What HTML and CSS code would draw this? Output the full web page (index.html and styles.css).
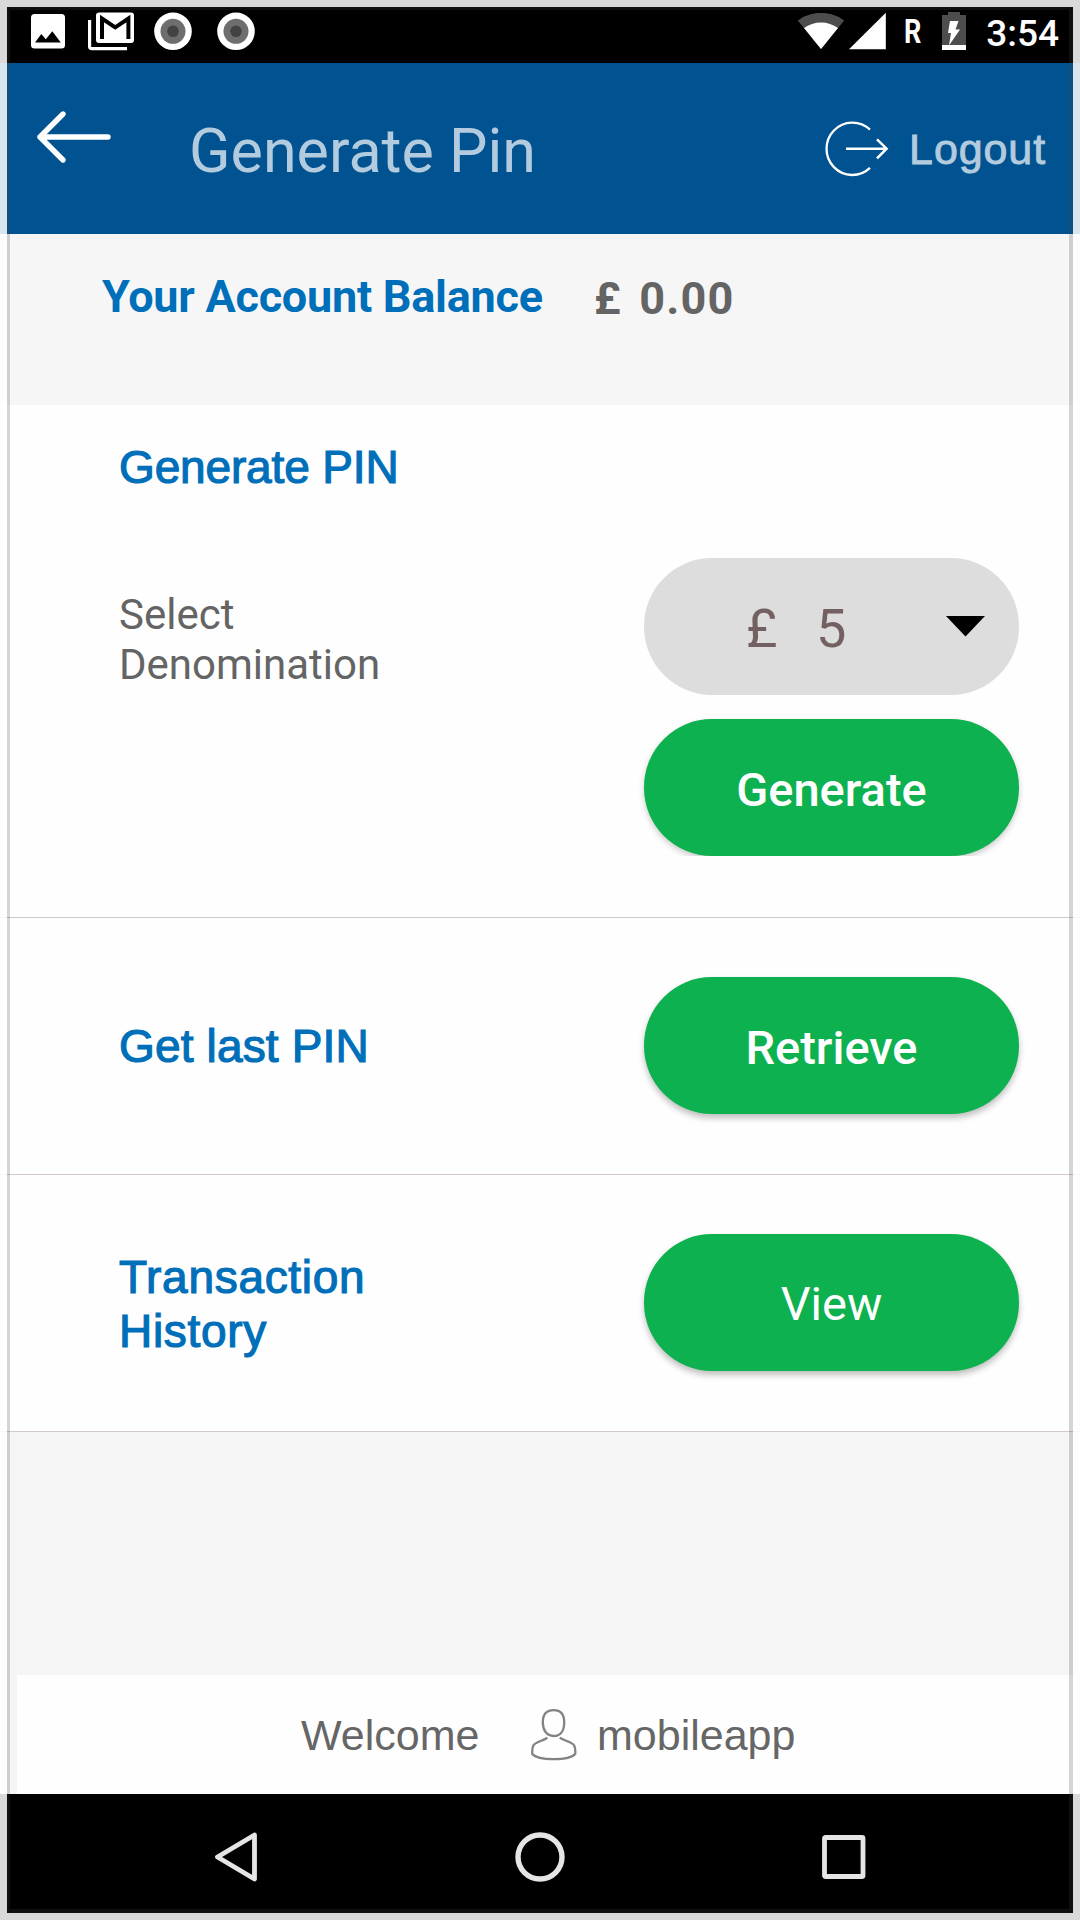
FILE: index.html
```
<!DOCTYPE html>
<html lang="en">
<head>
    <meta charset="UTF-8">
    <meta name="viewport" content="width=device-width, initial-scale=1.0">
    <title>Generate Pin</title>
    <link rel="stylesheet" href="styles.css">
</head>
<body>
    <div class="screen">
        <!-- status bar -->
        <div class="status-bar">
            <svg class="st-image" width="36" height="63" viewBox="0 0 36 63">
                <rect x="1" y="14" width="34" height="34.5" rx="3.5" fill="#fff"/>
                <path d="M5 42.5l6.3-8.5 4.5 5.3 6.5-8 8.5 11.2z" fill="#000"/>
            </svg>
            <svg class="st-mail" width="46" height="63" viewBox="0 0 46 63">
                <path d="M1.6 20v26.7a2 2 0 0 0 2 2H39" fill="none" stroke="#fff" stroke-width="3.2"/>
                <rect x="8" y="12.5" width="38" height="30.5" rx="3" fill="#fff"/>
                <path d="M14 39V18.5l13.2 8.8 13.2-8.8V39" fill="none" stroke="#000" stroke-width="4"/>
            </svg>
            <svg class="st-dot" width="38" height="63" viewBox="0 0 38 63">
                <circle cx="19" cy="31.3" r="18.8" fill="#fff"/>
                <circle cx="19" cy="31.3" r="12.5" fill="#6e6e6e"/>
                <circle cx="19" cy="31.3" r="5.8" fill="#424242"/>
            </svg>
            <svg class="st-dot second" width="38" height="63" viewBox="0 0 38 63">
                <circle cx="19" cy="31.3" r="18.8" fill="#fff"/>
                <circle cx="19" cy="31.3" r="12.5" fill="#6e6e6e"/>
                <circle cx="19" cy="31.3" r="5.8" fill="#424242"/>
            </svg>
            <div class="st-right">
                <svg width="48" height="63" viewBox="0 0 48 63">
                    <path d="M24 49L.8 20.6C13 10.3 35 10.3 47.2 20.6z" fill="#4d4d4d"/>
                    <path d="M24 49L7 28C16.5 20.5 31.5 20.5 41 28z" fill="#fff"/>
                </svg>
                <svg class="st-signal" width="37" height="63" viewBox="0 0 37 63">
                    <path d="M0 49.3L36.8 12.7V49.3z" fill="#fff"/>
                </svg>
                <span class="st-roaming">R</span>
                <svg class="st-battery" width="24" height="63" viewBox="0 0 24 63">
                    <path d="M6 12h12v3h6v30H0V15h6z" fill="#4d4d4d"/>
                    <rect y="45" width="24" height="5" fill="#fff"/>
                    <path d="M8 21h8.5L13.5 29.5H18L7 45.5l2-12.5H6z" fill="#fff"/>
                </svg>
                <span class="st-time">3:54</span>
            </div>
        </div>

        <!-- header -->
        <header class="app-header">
            <svg class="back" width="76" height="54" viewBox="0 0 76 54">
                <path d="M27 4L4 27l23 23M4 27h68" fill="none" stroke="#fff" stroke-width="5.4" stroke-linecap="round" stroke-linejoin="round"/>
            </svg>
            <h1>Generate Pin</h1>
            <div class="logout">
                <svg width="64" height="56" viewBox="0 0 64 56">
                    <path d="M45 8.7A25.8 26.2 0 1 0 45 46.9" fill="none" stroke="#fff" stroke-width="2.3"/>
                    <path d="M21 27.7h40M52 18.3l9.6 9.4-9.6 9.7" fill="none" stroke="#fff" stroke-width="2.5"/>
                </svg>
                <span>Logout</span>
            </div>
        </header>

        <!-- balance -->
        <div class="balance">
            <span class="balance-label">Your Account Balance</span>
            <span class="balance-amount">£ 0.00</span>
        </div>

        <!-- generate pin -->
        <section class="generate">
            <h2>Generate PIN</h2>
            <div class="generate-body">
                <p class="label">Select<br>Denomination</p>
                <div class="controls">
                    <div class="select">
                        <span class="currency">£</span>
                        <span class="value">5</span>
                        <svg width="39" height="21" viewBox="0 0 39 21"><path d="M0 0h39L19.5 20.5z" fill="#000"/></svg>
                    </div>
                    <button class="btn btn-generate">Generate</button>
                </div>
            </div>
        </section>

        <section class="row">
            <h2 class="last-pin">Get last PIN</h2>
            <button class="btn">Retrieve</button>
        </section>

        <section class="row">
            <h2 class="history">Transaction<br>History</h2>
            <button class="btn btn-view">View</button>
        </section>

        <div class="spacer"></div>

        <footer class="welcome">
            <span class="hello">Welcome</span>
            <svg width="46" height="52" viewBox="0 0 46 52">
                <path d="M22.8 1.2C15 1.2 11.8 6 11.8 13.5C11.8 21 15.5 27 22.8 27C30 27 33.2 21 33.2 13.5C33.2 6 30 1.2 22.8 1.2z" fill="none" stroke="#838383" stroke-width="2.3"/>
                <path d="M16.3 28.5C14 31.5 4.5 32.5 2.3 36.5C1 39.5 1.1 42 1.3 45C7 51.8 38.5 51.8 44.2 45C44.5 42 44.5 39.5 43.2 36.5C41 32.5 31.5 31.5 28.9 28.5" fill="none" stroke="#838383" stroke-width="2.3"/>
            </svg>
            <span class="user">mobileapp</span>
        </footer>

        <!-- android navigation -->
        <nav class="nav-bar">
            <svg width="52" height="52" viewBox="0 0 52 52">
                <path d="M44.5 4L7.5 26l37 22z" fill="none" stroke="#e6e5e6" stroke-width="4.8" stroke-linejoin="round"/>
            </svg>
            <svg width="52" height="52" viewBox="0 0 52 52">
                <circle cx="26" cy="26" r="22" fill="none" stroke="#e6e5e6" stroke-width="5.4"/>
            </svg>
            <svg width="52" height="52" viewBox="0 0 52 52">
                <rect x="6.5" y="6.5" width="38.5" height="39" rx="1" fill="none" stroke="#e6e5e6" stroke-width="4.8"/>
            </svg>
        </nav>

        <!-- frame drawn over the whole screen -->
        <div class="frame"><div class="frame-line"></div></div>
    </div>
</body>
</html>
```

FILE: styles.css
```
* {
    box-sizing: border-box;
    margin: 0;
    padding: 0;
}

body {
    font-family: Roboto, "Liberation Sans", sans-serif;
    color: #646464;
    background: #fefefe;
}

svg {
    display: block;
    flex: none;
}

.screen {
    position: relative;
    width: 1080px;
    height: 1920px;
    display: flex;
    flex-direction: column;
    overflow: hidden;
    white-space: nowrap;
}

/* status bar */
.status-bar {
    display: flex;
    height: 63px;
    padding: 0 21px 0 30px;
    background: #000;
    color: #fff;
}

.st-mail {
    margin-left: 22px;
}

.st-dot {
    margin-left: 20px;
}

.st-dot.second {
    margin-left: 25px;
}

.st-right {
    display: flex;
    margin-left: auto;
}

.st-signal {
    margin-left: 4px;
}

.st-roaming {
    width: 21px;
    margin-left: 18px;
    font-size: 33px;
    font-weight: 700;
    line-height: 64px;
    transform: scaleX(0.82);
    transform-origin: left;
}

.st-battery {
    margin-left: 17px;
}

.st-time {
    margin-left: 20px;
    font-size: 37px;
    font-weight: 500;
    line-height: 67px;
}

/* header */
.app-header {
    display: flex;
    align-items: flex-start;
    height: 171px;
    padding: 0 34px 0 36px;
    background: #005291;
    color: #b3cbde;
}

.back {
    margin-top: 47px;
}

.app-header h1 {
    margin-left: 77px;
    font-size: 61px;
    font-weight: 400;
    line-height: 177px;
}

.logout {
    display: flex;
    align-items: center;
    height: 172px;
    margin-left: auto;
    font-family: "Liberation Sans", Arial, sans-serif;
    font-size: 43px;
    letter-spacing: 0.9px;
    -webkit-text-stroke: 0.9px #b3cbde;
}

.logout svg {
    margin-right: 20px;
}

.logout span {
    padding-top: 1px;
}

/* balance */
.balance {
    display: flex;
    align-items: flex-start;
    height: 171px;
    padding: 36px 0 0 102px;
    background: #f6f6f6;
    font-size: 45px;
    font-weight: 700;
    line-height: 53px;
}

.balance-label {
    width: 492px;
    color: #006fba;
    letter-spacing: -0.25px;
}

.balance-amount {
    margin-top: 2px;
    letter-spacing: 1.2px;
    word-spacing: 5px;
}

/* sections */
h2 {
    font-family: "Liberation Sans", Arial, sans-serif;
    font-size: 46px;
    font-weight: 400;
    line-height: 54px;
    color: #006fba;
    letter-spacing: -0.15px;
    -webkit-text-stroke: 1.2px #006fba;
}

.last-pin {
    letter-spacing: 0.15px;
}

.history {
    padding-top: 1px;
    letter-spacing: 0.7px;
}

.generate {
    height: 513px;
    padding: 35px 61px 0 119px;
    border-bottom: 1px solid #cfc7c7;
}

.generate-body {
    display: flex;
    justify-content: space-between;
    margin-top: 64px;
}

.label {
    padding-top: 32px;
    font-size: 42px;
    line-height: 50px;
}

.controls {
    display: flex;
    flex-direction: column;
    gap: 24px;
}

.select {
    display: flex;
    align-items: center;
    width: 375px;
    height: 137px;
    padding-left: 102px;
    border-radius: 68px;
    background: #ddd;
    color: #736060;
    font-size: 54px;
    line-height: 60px;
}

.select span {
    padding-top: 4px;
}

.currency {
    width: 70px;
}

.value {
    width: 130px;
}

.btn {
    width: 375px;
    height: 137px;
    padding-top: 4px;
    border: 0;
    border-radius: 68px;
    background: #0db14f;
    box-shadow: 0 4px 6px rgba(0, 0, 0, 0.25);
    color: #fff;
    font-family: inherit;
    font-size: 47px;
    font-weight: 500;
}

/* shadow is cut at the bottom edge */
.btn-generate {
    padding-top: 3px;
    box-shadow: 0 3px 6px rgba(0, 0, 0, 0.2);
    clip-path: inset(-10px -10px 0 -10px);
}

.btn-view {
    padding-top: 2px;
    font-weight: 400;
}

.row {
    display: flex;
    align-items: center;
    justify-content: space-between;
    height: 257px;
    padding: 0 61px 0 119px;
    border-bottom: 1px solid #d3c9c9;
}

.row .btn {
    margin-bottom: 2px;
}

.spacer {
    height: 243px;
    background: #f5f5f5;
}

/* footer */
.welcome {
    display: flex;
    align-items: center;
    height: 119px;
    padding-left: 284px;
    border-left: 17px solid #f5f5f5;
    font-family: "Liberation Sans", Arial, sans-serif;
    font-size: 43px;
    color: #666;
}

.welcome span {
    padding-top: 2px;
}

.hello {
    width: 230px;
}

.user {
    margin-left: 20px;
}

/* navigation bar */
.nav-bar {
    display: grid;
    grid-template-columns: repeat(3, 304px);
    place-items: center;
    height: 126px;
    padding-left: 84px;
    background: #000;
}

/* frame */
.frame {
    position: absolute;
    inset: 0;
    border: 7px solid rgba(255, 255, 255, 0.85);
}

.frame-line {
    height: 100%;
    border: solid rgba(68, 68, 68, 0.22);
    border-width: 3px 4px 4px 3px;
}
```
